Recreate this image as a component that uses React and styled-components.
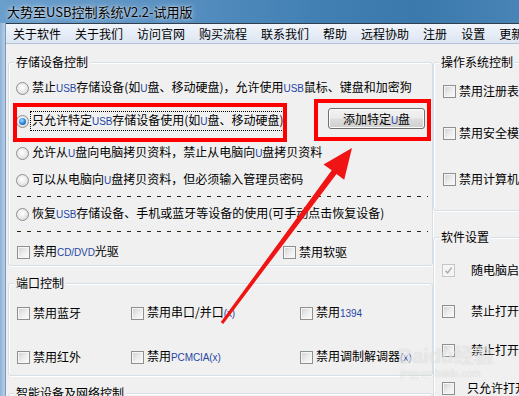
import React from 'react';
import styled, { createGlobalStyle, css } from 'styled-components';

const FONT = `"Noto Sans CJK SC", "Liberation Sans", sans-serif`;

const GlobalStyle = createGlobalStyle`
  html, body {
    margin: 0;
    padding: 0;
    background: #f0f0f0;
  }
  body {
    font-family: ${FONT};
  }
`;

const Window = styled.div`
  position: relative;
  width: 519px;
  height: 396px;
  overflow: hidden;
  display: flex;
  flex-direction: column;
  background: #f0f0f0;
  font-family: ${FONT};
  font-size: 12px;
  color: #000;
`;

const TitleBar = styled.div`
  flex: none;
  height: 23px;
  display: flex;
  align-items: center;
  padding-left: 7px;
  font-size: 13px;
  white-space: nowrap;
  background: linear-gradient(90deg, #6a9ecc 0%, #5a91c2 30%, #4280b3 60%, #3b78ab 80%, #4884b6 100%);
  text-shadow: 0 0 6px rgba(255, 255, 255, 0.85), 0 0 2px rgba(255, 255, 255, 0.7);
`;

const Frame = styled.div`
  flex: 1;
  display: flex;
  min-height: 0;
`;

const FrameEdge = styled.div`
  flex: none;
  width: 5px;
  background: linear-gradient(90deg, #8fb2d6, #b7cfe8);
  border-right: 1px solid #7d98b6;
`;

const Client = styled.div`
  flex: 1;
  min-width: 0;
  display: flex;
  flex-direction: column;
  border-top: 1px solid #2f3d4c;
`;

const MenuBar = styled.div`
  flex: none;
  height: 19px;
  display: flex;
  align-items: center;
  white-space: nowrap;
  overflow: hidden;
  background: linear-gradient(#f1f5fb, #dbe5f2);
  border-bottom: 1px solid #b4c5da;
`;

const MenuItem = styled.span`
  flex: none;
  padding: 0 7px;
  line-height: 19px;
`;

const Content = styled.div`
  flex: 1;
  display: flex;
  align-items: flex-start;
  padding-left: 2px;
  overflow: hidden;
`;

const Column = styled.div`
  flex: none;
  width: ${p => p.$w}px;
  display: flex;
  flex-direction: column;
`;

const Group = styled.div`
  margin-top: ${p => p.$mt}px;
  border: 1px solid #d5dfe5;
  border-radius: 3px;
  box-shadow: inset 1px 1px 0 #fff, 1px 1px 0 #fff;
  display: flex;
  flex-direction: column;
`;

const Legend = styled.div`
  align-self: flex-start;
  margin: -8px 0 0 5px;
  padding: 0 2px;
  height: 14px;
  line-height: 14px;
  background: #f0f0f0;
  white-space: nowrap;
`;

const Stack = styled.div`
  display: flex;
  flex-direction: column;
  padding: ${p => p.$pt || 0}px 0 ${p => p.$pb || 0}px;
`;

const Row = styled.div`
  height: ${p => p.$h}px;
  display: flex;
  align-items: center;
  padding-left: ${p => (p.$pl == null ? 7 : p.$pl)}px;
  white-space: nowrap;
`;

const Dash = styled.div`
  height: 1px;
  margin: 0 4px 0 8px;
  background: repeating-linear-gradient(90deg, #2b2418 0 4px, transparent 4px 10px);
`;

const Lat = styled.span`
  font-family: "Liberation Sans", sans-serif;
  font-size: 10px;
  letter-spacing: -0.1px;
  color: #2746a3;
`;

const RadioDot = styled.span`
  flex: none;
  position: relative;
  width: 11px;
  height: 11px;
  border-radius: 50%;
  border: 1px solid #8d8f91;
  background: radial-gradient(circle at 45% 40%, #ffffff 0%, #ececec 45%, #cfd0d1 100%);
  ${p => p.$on && css`
    &::after {
      content: '';
      position: absolute;
      inset: 2px;
      border-radius: 50%;
      background: radial-gradient(circle at 40% 35%, #a8e0ff 0%, #2d8be0 50%, #0c3f8f 100%);
    }
  `}
`;

const Text = styled.span`
  margin-left: ${p => (p.$focus ? 1 : p.$gap || 3)}px;
  padding: ${p => (p.$focus ? '0 1px' : '0')};
  border: ${p => (p.$focus ? '1px dotted #000' : 'none')};
  line-height: 16px;
`;

const Box = styled.span`
  flex: none;
  width: 11px;
  height: 11px;
  display: flex;
  align-items: center;
  justify-content: center;
  border: 1px solid ${p => (p.$disabled ? '#c5c5c5' : '#8e8f8f')};
  background: ${p => (p.$disabled
    ? '#f4f4f4'
    : 'linear-gradient(135deg, #cfd0d1 0%, #eeeeee 55%, #fbfbfb 100%)')};
  box-shadow: inset 0 0 0 1px #f6f6f6;
`;

const Button = styled.button`
  flex: none;
  width: 97px;
  height: 21px;
  margin: 0 7px 6px auto;
  padding: 0;
  font-family: ${FONT};
  font-size: 12px;
  color: #000;
  border: 1px solid #707070;
  border-radius: 3px;
  background: linear-gradient(#f3f3f3 0%, #ebebeb 48%, #dddddd 52%, #cfcfcf 100%);
  box-shadow: inset 0 0 0 1px #fbfbfb;
`;

const PortGrid = styled.div`
  display: grid;
  grid-template-columns: 114px 169px auto;
  grid-auto-rows: 24px;
  row-gap: 20px;
  padding: 11px 0 6px 8px;
  white-space: nowrap;
`;

const Cell = styled.div`
  display: flex;
  align-items: center;
`;

const TwoCol = styled.div`
  display: grid;
  grid-template-columns: 266px auto;
  align-items: center;
  height: 26px;
  margin-top: 7px;
  padding-left: 8px;
  white-space: nowrap;
`;

const Overlay = styled.svg`
  position: absolute;
  left: 0;
  top: 0;
  pointer-events: none;
`;

const Watermark = styled.div`
  position: absolute;
  left: 398px;
  top: 344px;
  display: flex;
  flex-direction: column;
  align-items: flex-start;
  color: rgba(255, 255, 255, 0.5);
  text-shadow: 0 0 1px rgba(140, 140, 140, 0.35);
  pointer-events: none;
  white-space: nowrap;
`;

const MarkBig = styled.span`
  font-family: "Liberation Sans", "Noto Sans CJK SC", sans-serif;
  font-weight: bold;
  font-size: 20px;
  line-height: 24px;
`;

const MarkSmall = styled.span`
  font-family: "Liberation Sans", sans-serif;
  font-size: 10px;
  line-height: 12px;
  margin-left: 2px;
`;

const Check = ({ on, disabled, gap, children }) => (
  <>
    <Box $disabled={disabled}>
      {on && (
        <svg width="9" height="9" viewBox="0 0 9 9">
          <path d="M1.5 4.8 L3.6 7 L7.6 1.6" fill="none" stroke="#a9a9a9" strokeWidth="1.4" />
        </svg>
      )}
    </Box>
    <Text $gap={gap}>{children}</Text>
  </>
);

const Radio = ({ on, focus, children }) => (
  <>
    <RadioDot $on={on} />
    <Text $focus={focus}>{children}</Text>
  </>
);

const menu = ['关于软件', '关于我们', '访问官网', '购买流程', '联系我们', '帮助', '远程协助', '注册', '设置', '更新'];

export default function App() {
  return (
    <>
      <GlobalStyle />
      <Window>
        <TitleBar>大势至USB控制系统V2.2-试用版</TitleBar>
        <Frame>
          <FrameEdge />
          <Client>
            <MenuBar>
              {menu.map(m => <MenuItem key={m}>{m}</MenuItem>)}
            </MenuBar>
            <Content>
              <Column $w={425}>
                <Group $mt={18}>
                  <Legend>存储设备控制</Legend>
                  <Stack $pt={7}>
                    <Row $h={24}>
                      <Radio>禁止<Lat>USB</Lat>存储设备(如<Lat>U</Lat>盘、移动硬盘)，允许使用<Lat>USB</Lat>鼠标、键盘和加密狗</Radio>
                    </Row>
                    <Row $h={42}>
                      <Radio on focus>只允许特定<Lat>USB</Lat>存储设备使用(如<Lat>U</Lat>盘、移动硬盘)</Radio>
                      <Button>添加特定<Lat>U</Lat>盘</Button>
                    </Row>
                    <Row $h={22}>
                      <Radio>允许从<Lat>U</Lat>盘向电脑拷贝资料，禁止从电脑向<Lat>U</Lat>盘拷贝资料</Radio>
                    </Row>
                    <Row $h={32}>
                      <Radio>可以从电脑向<Lat>U</Lat>盘拷贝资料，但必须输入管理员密码</Radio>
                    </Row>
                    <Dash />
                    <Row $h={34}>
                      <Radio>恢复<Lat>USB</Lat>存储设备、手机或蓝牙等设备的使用(可手动点击恢复设备)</Radio>
                    </Row>
                    <Dash />
                    <TwoCol>
                      <Cell><Check>禁用<Lat>CD/DVD</Lat>光驱</Check></Cell>
                      <Cell><Check>禁用软驱</Check></Cell>
                    </TwoCol>
                  </Stack>
                </Group>

                <Group $mt={17}>
                  <Legend>端口控制</Legend>
                  <PortGrid>
                    <Cell><Check>禁用蓝牙</Check></Cell>
                    <Cell><Check>禁用串口/并口<Lat>(x)</Lat></Check></Cell>
                    <Cell><Check>禁用<Lat>1394</Lat></Check></Cell>
                    <Cell><Check>禁用红外</Check></Cell>
                    <Cell><Check>禁用<Lat>PCMCIA(x)</Lat></Check></Cell>
                    <Cell><Check>禁用调制解调器<Lat>(x)</Lat></Check></Cell>
                  </PortGrid>
                </Group>

                <Group $mt={17}>
                  <Legend>智能设备及网络控制</Legend>
                  <Stack $pt={30} />
                </Group>
              </Column>

              <Column $w={200}>
                <Group $mt={18}>
                  <Legend>操作系统控制</Legend>
                  <Stack $pt={10} $pb={15}>
                    <Row $h={24} $pl={9}><Check>禁用注册表编辑器</Check></Row>
                    <Row $h={60} $pl={9}><Check>禁用安全模式</Check></Row>
                    <Row $h={32} $pl={9}><Check>禁用计算机管理</Check></Row>
                  </Stack>
                </Group>
                <Group $mt={26}>
                  <Legend>软件设置</Legend>
                  <Stack>
                    <Row $h={52} $pl={8}><Check on disabled gap={16}>随电脑启动</Check></Row>
                    <Row $h={30} $pl={8}><Check gap={16}>禁止打开任务管理器</Check></Row>
                    <Row $h={48} $pl={8}><Check gap={16}>禁止打开组策略</Check></Row>
                    <Row $h={28} $pl={8}><Check gap={12}>只允许打开指定程序</Check></Row>
                  </Stack>
                </Group>
              </Column>
            </Content>
          </Client>
        </Frame>

        <Watermark>
          <MarkBig>Baidu经验</MarkBig>
          <MarkSmall>jingyan.baidu.com</MarkSmall>
        </Watermark>

        <Overlay width="519" height="396" viewBox="0 0 519 396">
          <rect x="15" y="105" width="270" height="35" fill="none" stroke="#ff0000" strokeWidth="4" />
          <rect x="316" y="101" width="113" height="38" fill="none" stroke="#ff0000" strokeWidth="4" />
          <polygon
            points="223.2,323.9 336.5,173.9 344.2,179.7 352,148 323.5,164.5 331.7,170.3 220.8,322.1"
            fill="#f01414"
          />
        </Overlay>
      </Window>
    </>
  );
}
